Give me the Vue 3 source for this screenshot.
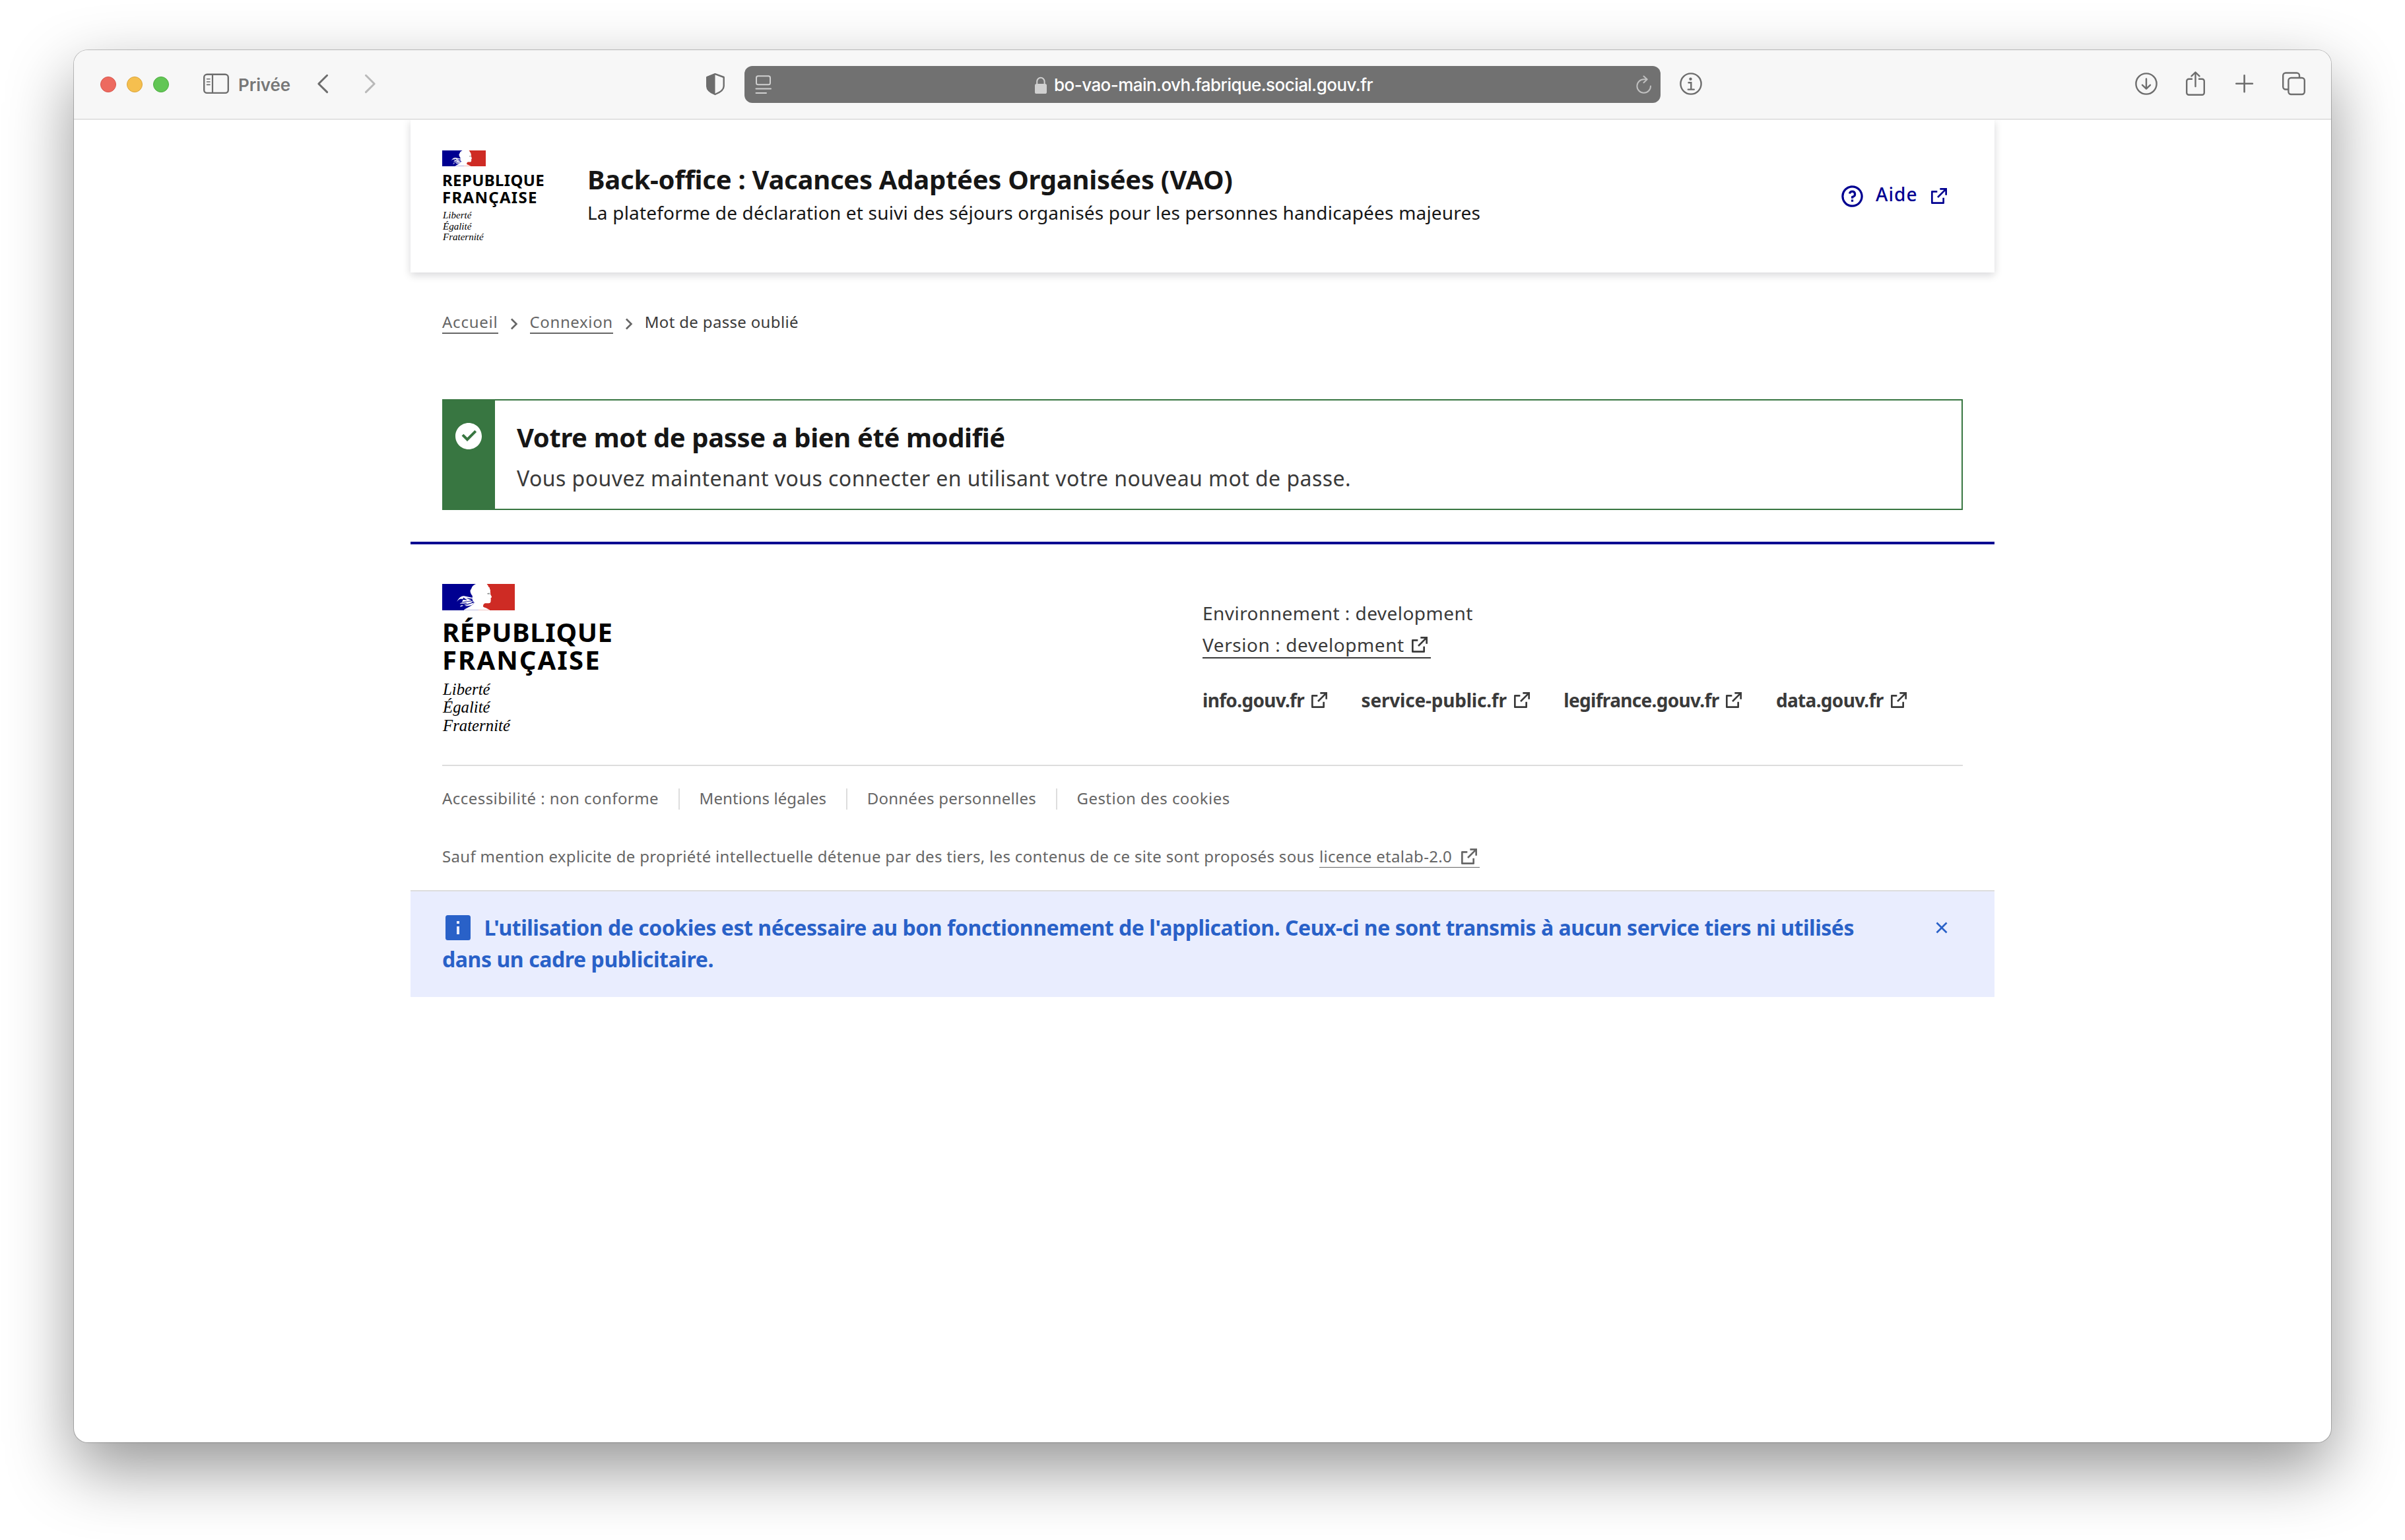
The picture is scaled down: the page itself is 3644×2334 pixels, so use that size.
<script setup>
import { h } from 'vue'

const linkPath =
  'M10 6v2H5v11h11v-5h2v6a1 1 0 0 1-1 1H4a1 1 0 0 1-1-1V7a1 1 0 0 1 1-1h6zm11-3v8h-2V6.413l-7.793 7.794-1.414-1.414L17.585 5H13V3h8z'
const chevronPath = 'M13.172 12l-4.95-4.95 1.414-1.414L16 12l-6.364 6.364-1.414-1.414z'

const icon = (path) => () =>
  h('svg', { viewBox: '0 0 24 24', width: 32, height: 32, fill: 'currentColor' }, [h('path', { d: path })])
const ExternalIcon = icon(linkPath)
const ChevronIcon = icon(chevronPath)

const Marianne = () =>
  h('svg', { viewBox: '0 0 110 40' }, [
    h('path', { fill: '#000091', d: 'M0 0H55V40H0z' }),
    h('path', { fill: '#ce2b24', d: 'M55 0H110V40H55z' }),
    h('path', {
      fill: '#fff',
      d: 'M51 0C47 2 45 4 44.5 6.500L42.500 10C42.300 13 44 16 46 18.500C45 20 46.500 22 45.500 24C47 25 46 27 49 28C46 33 39 35 33 39.300H71.500C68 37 65 36 62.200 34.800C61.500 32 63 30 65 29.300C68 29 72 30 73 28C74.200 26 73.200 25 73.800 23.500L73.500 21.500C75 20.500 75.500 20 74.800 19L73 15.500C73.500 13 72.500 12 73 10C73 8 71.500 8 72 6C71 4 69.500 5 69.800 3C69 1.500 68 1 67.700 0z'
    }),
    h('path', {
      fill: '#fff',
      d: 'M22 27C25 22 28 18 33 18.300L46 21V22.500L36 21.300L45 25L30 27.600L32 23L28 22.500C25 23 24 25 22 27zM26.500 30C30 27 34 29 37 27L47 26L44 28.500C38 30 36 32 33 31.500C37 30 40 28 36 29C33 30.500 30 29 26.500 30zM27 34.500C28 32 31 31.500 32 33C30 33.500 29 34.500 27 34.500zM34 33C39 31 43 30 49 28L45 32C41 33 38 34 34 33z'
    }),
    h('path', { fill: '#000091', d: 'M32 20.500L38 24.500L31 24z' }),
    h('path', { fill: '#8b8b8b', d: 'M68 14.200L72 13.400V14.400L71.300 16.500L70.500 14.800L69.800 16.200z' }),
    h('path', { fill: '#d9d9f0', d: 'M33 39.200H55V40H33z' }),
    h('path', { fill: '#f6d5d3', d: 'M55 39.200H72V40H55z' })
  ])

const siteLinks = [
  { label: 'info.gouv.fr', tone: 'a' },
  { label: 'service-public.fr', tone: 'b' },
  { label: 'legifrance.gouv.fr', tone: 'a' },
  { label: 'data.gouv.fr', tone: 'a' }
]
const legalLinks = [
  { label: 'Accessibilité : non conforme', tone: 'c' },
  { label: 'Mentions légales', tone: 'd' },
  { label: 'Données personnelles', tone: 'e' },
  { label: 'Gestion des cookies', tone: 'c' }
]
</script>

<template>
  <div class="desktop">
    <div class="window">
      <div class="toolbar">
        <div class="lights"><i class="red"></i><i class="yellow"></i><i class="green"></i></div>
        <svg class="sidebar" viewBox="308 108 40 40" width="40" height="40" fill="none" stroke="#6d6d6d">
          <rect x="309.200" y="112.700" width="36.600" height="28.200" rx="4.500" stroke-width="2.400" />
          <path d="M322 112.500V141" stroke-width="2.200" />
          <path d="M313.500 119.800h4.500M313.500 124h4.500M313.500 128.400h4.500" stroke-width="1.600" stroke-linecap="round" />
        </svg>
        <span class="private">Privée</span>
        <svg class="back" viewBox="480 108 20 40" width="20" height="40" fill="none" stroke="#6d6d6d" stroke-width="3" stroke-linecap="round" stroke-linejoin="round">
          <path d="M495.600 114.300L482.800 127L495.600 139.600" />
        </svg>
        <svg class="forward" viewBox="551 108 20 40" width="20" height="40" fill="none" stroke="#b9b9b9" stroke-width="3" stroke-linecap="round" stroke-linejoin="round">
          <path d="M554.400 114.300L567.200 127L554.400 139.600" />
        </svg>
        <svg class="shield" viewBox="1069 108 30 40" width="30" height="40">
          <path d="M1083.500 112.200L1096.700 117V130.500C1096.700 136 1090 140.500 1083.500 143C1077 140.500 1071.200 136 1071.200 130.500V117z" fill="none" stroke="#6d6d6d" stroke-width="2.400" stroke-linejoin="round" />
          <path d="M1083.500 111.500V143.500C1077 141 1070.500 136 1070.500 130.500V116.500z" fill="#6d6d6d" />
        </svg>
        <div class="address">
          <svg viewBox="1144 108 26 40" width="26" height="40" fill="none" stroke="#d0d0d0" stroke-width="2">
            <rect x="1146" y="115.300" width="21" height="13" rx="2.600" />
            <path d="M1145.500 134.400h22.500M1145.500 141h15.500" stroke-linecap="round" />
          </svg>
          <svg class="lock" viewBox="1566 108 22 40" width="22" height="40">
            <rect x="1568" y="127" width="18" height="15" rx="2.600" fill="#d0d0d0" />
            <path d="M1571.200 128v-4.500a5.700 5.700 0 0 1 11.400 0v4.500" fill="none" stroke="#d0d0d0" stroke-width="2" />
          </svg>
          <span>bo-vao-main.ovh.fabrique.social.gouv.fr</span>
          <svg class="reload" viewBox="2478 108 26 40" width="26" height="40" fill="none" stroke="#c0c0c0" stroke-width="2" stroke-linecap="round" stroke-linejoin="round">
            <path d="M2501 130.500A10.300 10.300 0 1 1 2490.700 120.200L2495.500 120.300M2490.500 115.500L2495.700 120.300L2490.500 125.300" />
          </svg>
        </div>
        <svg class="info" viewBox="2544 108 36 40" width="36" height="40" fill="none" stroke="#6d6d6d" stroke-width="2.400">
          <circle cx="2562" cy="127" r="15.600" />
          <circle cx="2561.500" cy="119.700" r="2.200" fill="#6d6d6d" stroke="none" />
          <path d="M2558.500 125.200h3.800v10M2557.800 135.600h9" stroke-linecap="round" />
        </svg>
        <div class="actions">
          <svg viewBox="3234 108 36 40" width="36" height="40" fill="none" stroke="#6d6d6d" stroke-width="2.400" stroke-linecap="round" stroke-linejoin="round">
            <circle cx="3252" cy="127" r="15.600" />
            <path d="M3252 119.500V134M3246 128.800L3252 134.600L3258 128.800" />
          </svg>
          <svg viewBox="3309 108 36 40" width="36" height="40" fill="none" stroke="#6d6d6d" stroke-width="2.400" stroke-linecap="round" stroke-linejoin="round">
            <path d="M3321 119.700H3316.500a3.300 3.300 0 0 0-3.300 3.300V140.500a3.300 3.300 0 0 0 3.300 3.300H3336.500a3.300 3.300 0 0 0 3.300-3.300V123a3.300 3.300 0 0 0-3.300-3.300H3332" />
            <path d="M3326.500 131V109.800M3320.500 115.300L3326.500 109.500L3332.500 115.300" />
          </svg>
          <svg viewBox="3382 108 36 40" width="36" height="40" stroke="#6d6d6d" stroke-width="2.600" stroke-linecap="round">
            <path d="M3387.300 126.700h24.600M3399.600 114.200v25" />
          </svg>
          <svg viewBox="3458 108 36 40" width="36" height="40" fill="none" stroke="#6d6d6d" stroke-width="2.400" stroke-linejoin="round">
            <rect x="3467.400" y="118" width="24.400" height="25" rx="4" />
            <path d="M3467 135.500H3463.200a4 4 0 0 1-4-4V114.500a4 4 0 0 1 4-4H3480a4 4 0 0 1 4 4V118" />
          </svg>
        </div>
      </div>

      <div class="page">
        <header class="header">
          <div class="logo small">
            <Marianne class="flag" />
            <div class="rf"><div class="l1">REPUBLIQUE</div><div class="l2">FRANÇAISE</div></div>
            <div class="motto">Liberté<br />Égalité<br />Fraternité</div>
          </div>
          <div class="service">
            <div class="title">Back-office : Vacances Adaptées Organisées (VAO)</div>
            <div class="tagline">La plateforme de déclaration et suivi des séjours organisés pour les personnes handicapées majeures</div>
          </div>
          <a class="help">
            <svg viewBox="0 0 24 24" width="39" height="39" fill="currentColor">
              <path d="M12 22C6.477 22 2 17.523 2 12S6.477 2 12 2s10 4.477 10 10-4.477 10-10 10zm0-2a8 8 0 1 0 0-16 8 8 0 0 0 0 16zm-1-5h2v2h-2v-2zm2-1.645V14h-2v-1.500a1 1 0 0 1 1-1 1.500 1.500 0 1 0-1.471-1.794l-1.962-.393A3.500 3.500 0 1 1 13 13.355z" />
            </svg>
            <span>Aide</span>
            <ExternalIcon />
          </a>
        </header>

        <nav class="crumbs">
          <a class="c1">Accueil</a><ChevronIcon class="sep" />
          <a class="c2">Connexion</a><ChevronIcon class="sep" />
          <span class="c3">Mot de passe oublié</span>
        </nav>

        <section class="alert">
          <div class="band">
            <svg viewBox="0 0 24 24" width="48" height="48" fill="#fff">
              <path d="M12 22C6.477 22 2 17.523 2 12S6.477 2 12 2s10 4.477 10 10-4.477 10-10 10zm-.997-6l7.070-7.071-1.414-1.414-5.656 5.657-2.829-2.829-1.414 1.414L11.003 16z" />
            </svg>
          </div>
          <div class="alert-body">
            <div class="alert-title">Votre mot de passe a bien été modifié</div>
            <div class="alert-text">Vous pouvez maintenant vous connecter en utilisant votre nouveau mot de passe.</div>
          </div>
        </section>

        <footer class="footer">
          <div class="footer-body">
            <div class="logo large">
              <Marianne class="flag" />
              <div class="rf"><div class="l1">RÉPUBLIQUE</div><div class="l2">FRANÇAISE</div></div>
              <div class="motto">Liberté<br />Égalité<br />Fraternité</div>
            </div>
            <div class="footer-info">
              <div class="env">Environnement : development</div>
              <a class="version"><span>Version : development</span><ExternalIcon /></a>
              <div class="sites">
                <a v-for="l in siteLinks" :key="l.label"><span :class="'t-' + l.tone">{{ l.label }}</span><ExternalIcon /></a>
              </div>
            </div>
          </div>
          <div class="legal">
            <a v-for="l in legalLinks" :key="l.label" :class="'t-' + l.tone">{{ l.label }}</a>
          </div>
          <div class="licence">
            <span>Sauf mention explicite de propriété intellectuelle détenue par des tiers, les contenus de ce site sont proposés sous</span>
            <a><span>licence etalab-2.0</span><ExternalIcon /></a>
          </div>
        </footer>

        <div class="notice">
          <div class="notice-text">
            <div class="n1">
              <svg viewBox="0 0 38 38" width="38" height="38">
                <rect width="38" height="38" rx="3.500" fill="#2961c8" />
                <path d="M17 9h4v4h-4zM17 17h4v12h-4z" fill="#e9edfe" />
              </svg>
              <span>L'utilisation de cookies est nécessaire au bon fonctionnement de l'application. Ceux-ci ne sont transmis à aucun service tiers ni utilisés</span>
            </div>
            <div class="n2">dans un cadre publicitaire.</div>
          </div>
          <svg class="close" viewBox="0 0 24 24" width="32" height="32" fill="currentColor">
            <path d="M12 10.586l4.950-4.950 1.414 1.414-4.950 4.950 4.950 4.950-1.414 1.414-4.950-4.950-4.950 4.950-1.414-1.414 4.950-4.950-4.950-4.950L7.050 5.636z" />
          </svg>
        </div>
      </div>
    </div>
  </div>
</template>

<style>
body { background: #fff; }
</style>

<style scoped>
.desktop { width: 3644px; height: 2334px; box-sizing: border-box; padding: 76px 112px 0; background: #fff; overflow: hidden; font-family: "Noto Sans", "Open Sans", sans-serif; }
.desktop * { box-sizing: border-box; }
svg { display: block; flex: none; }
span, a, .title, .tagline, .alert-title, .alert-text { white-space: nowrap; }
.window { width: 3420px; height: 2110px; border-radius: 21px; background: #fff; box-shadow: 0 0 0 1px rgba(0, 0, 0, .22), 0 40px 100px rgba(0, 0, 0, .42); }

.toolbar { position: relative; z-index: 1; display: flex; align-items: center; height: 105px; padding: 0 38px 0 40px; background: #f7f7f7; border-bottom: 1px solid #d6d6d6; border-radius: 21px 21px 0 0; box-shadow: 0 1px 0 #f0f0f0; }
.lights { display: flex; gap: 16px; }
.lights i { width: 24px; height: 24px; border-radius: 50%; }
.red { background: #ed6a5f; border: 1px solid #d9574d; }
.yellow { background: #f5bf4f; border: 1px solid #dba53b; }
.green { background: #62c655; border: 1px solid #4dac3f; }
.sidebar { margin-left: 52px; }
.private { width: 80px; margin-left: 13px; padding-top: 1px; font: 600 26px/40px Inter, sans-serif; letter-spacing: -.1px; color: #777; }
.back { margin-left: 39px; }
.forward { margin-left: 51px; }
.shield { margin-left: 498px; }
.address { display: flex; align-items: center; width: 1388px; height: 56px; margin-left: 29px; padding: 0 12px 0 16px; border-radius: 12px; background: #717171; color: #fff; }
.lock { margin-left: 396px; }
.address span { margin-left: 9px; padding-top: 1px; font: 500 26px/40px Inter, sans-serif; letter-spacing: -.55px; }
.reload { margin-left: auto; }
.info { margin-left: 28px; }
.actions { display: flex; gap: 38.600px; margin-left: auto; }

.page { width: 2400px; margin: 0 auto; }
.header { display: flex; align-items: flex-start; height: 232px; padding: 0 68px 0 48px; background: #fff; box-shadow: 0 4px 12px rgba(0, 0, 18, .16); }
.logo { color: #000; }
.rf { font-weight: 700; }
.motto { font-family: "Liberation Serif", serif; font-style: italic; }
.small { width: 220px; padding-top: 47px; }
.small .flag { width: 66px; height: 24px; }
.small .rf { margin-top: 8px; font-size: 24px; line-height: 26px; }
.small .l1 { letter-spacing: .350px; }
.small .l2 { letter-spacing: 1.300px; }
.small .motto { margin: 6px 0 0 1px; font-size: 15px; line-height: 16.500px; }
.service { padding-top: 65px; color: #161616; }
.title { font-size: 40px; line-height: 52px; font-weight: 700; letter-spacing: -.270px; }
.tagline { font-size: 28px; line-height: 48px; letter-spacing: .190px; }
.help { display: flex; align-items: center; height: 48px; margin: 92px 0 0 auto; color: #000091; font-size: 28px; font-weight: 500; }
.help span { width: 66px; margin: 0 14px 6px 16px; letter-spacing: 1.100px; }

.crumbs { display: flex; margin: 59px 48px 0; height: 34px; font-size: 24px; line-height: 32px; color: #666; }
.crumbs a { border-bottom: 2px solid #666; }
.sep { margin: 3px 8px 0; }
.c1 { letter-spacing: .770px; }
.c2 { letter-spacing: .620px; }
.c3 { color: #3a3a3a; letter-spacing: .330px; }

.alert { display: flex; height: 168px; margin: 99px 48px 48px; border: 2px solid #387641; }
.band { width: 78px; padding: 30px 0 0 14px; background: #387641; }
.alert-body { padding: 28px 0 0 33px; }
.alert-title { font-size: 40px; line-height: 56px; font-weight: 700; letter-spacing: -.380px; color: #161616; }
.alert-text { margin-top: 10px; font-size: 32px; line-height: 48px; letter-spacing: .450px; color: #3a3a3a; }

.footer { height: 528px; padding: 0 48px; border-top: 4px solid #000091; }
.footer-body { display: flex; height: 336px; border-bottom: 2px solid #ddd; color: #3a3a3a; }
.large { width: 1152px; padding-top: 60px; }
.large .flag { width: 110px; height: 40px; }
.large .rf { margin-top: 12px; font-size: 40px; line-height: 42px; }
.large .l1 { letter-spacing: .600px; }
.large .l2 { letter-spacing: 2.100px; }
.large .motto { margin: 9.700px 0 0 1px; font-size: 24.800px; line-height: 27.800px; }
.footer-info { padding-top: 80px; font-size: 28px; line-height: 48px; }
.env { letter-spacing: .460px; }
.version { display: flex; align-items: flex-start; width: 346px; height: 45px; border-bottom: 2px solid #3a3a3a; letter-spacing: .570px; }
.version svg, .sites svg { margin: 8px 0 0 7px; }
.sites { display: flex; gap: 47.500px; margin-top: 39px; font-weight: 700; }
.sites a { display: flex; align-items: flex-start; }
.t-a { letter-spacing: -.680px; }
.t-b { letter-spacing: -.210px; }
.t-c { letter-spacing: .450px; }
.t-d { letter-spacing: .080px; }
.t-e { letter-spacing: .250px; }
.legal { display: flex; height: 32px; margin-top: 34px; font-size: 24px; line-height: 30px; color: #666; }
.legal a + a { margin-left: 30px; padding-left: 29.500px; border-left: 2px solid #ddd; }
.licence { display: flex; margin-top: 55px; font-size: 24px; line-height: 32px; color: #666; letter-spacing: .325px; }
.licence a { display: flex; width: 243px; height: 33px; margin-left: 7.500px; border-bottom: 1px solid #666; }
.licence svg { margin-left: 9.500px; }

.notice { display: flex; align-items: flex-start; height: 162px; padding: 31px 64px 0 48px; border-top: 2px solid #ddd; background: #e9edfe; color: #2961c8; font-size: 32px; line-height: 48px; font-weight: 700; }
.n1 { display: flex; align-items: center; letter-spacing: -.470px; }
.n1 svg { margin: 0 20.500px 0 5px; }
.n2 { letter-spacing: -.420px; }
.close { margin: 8px 0 0 auto; }
</style>
